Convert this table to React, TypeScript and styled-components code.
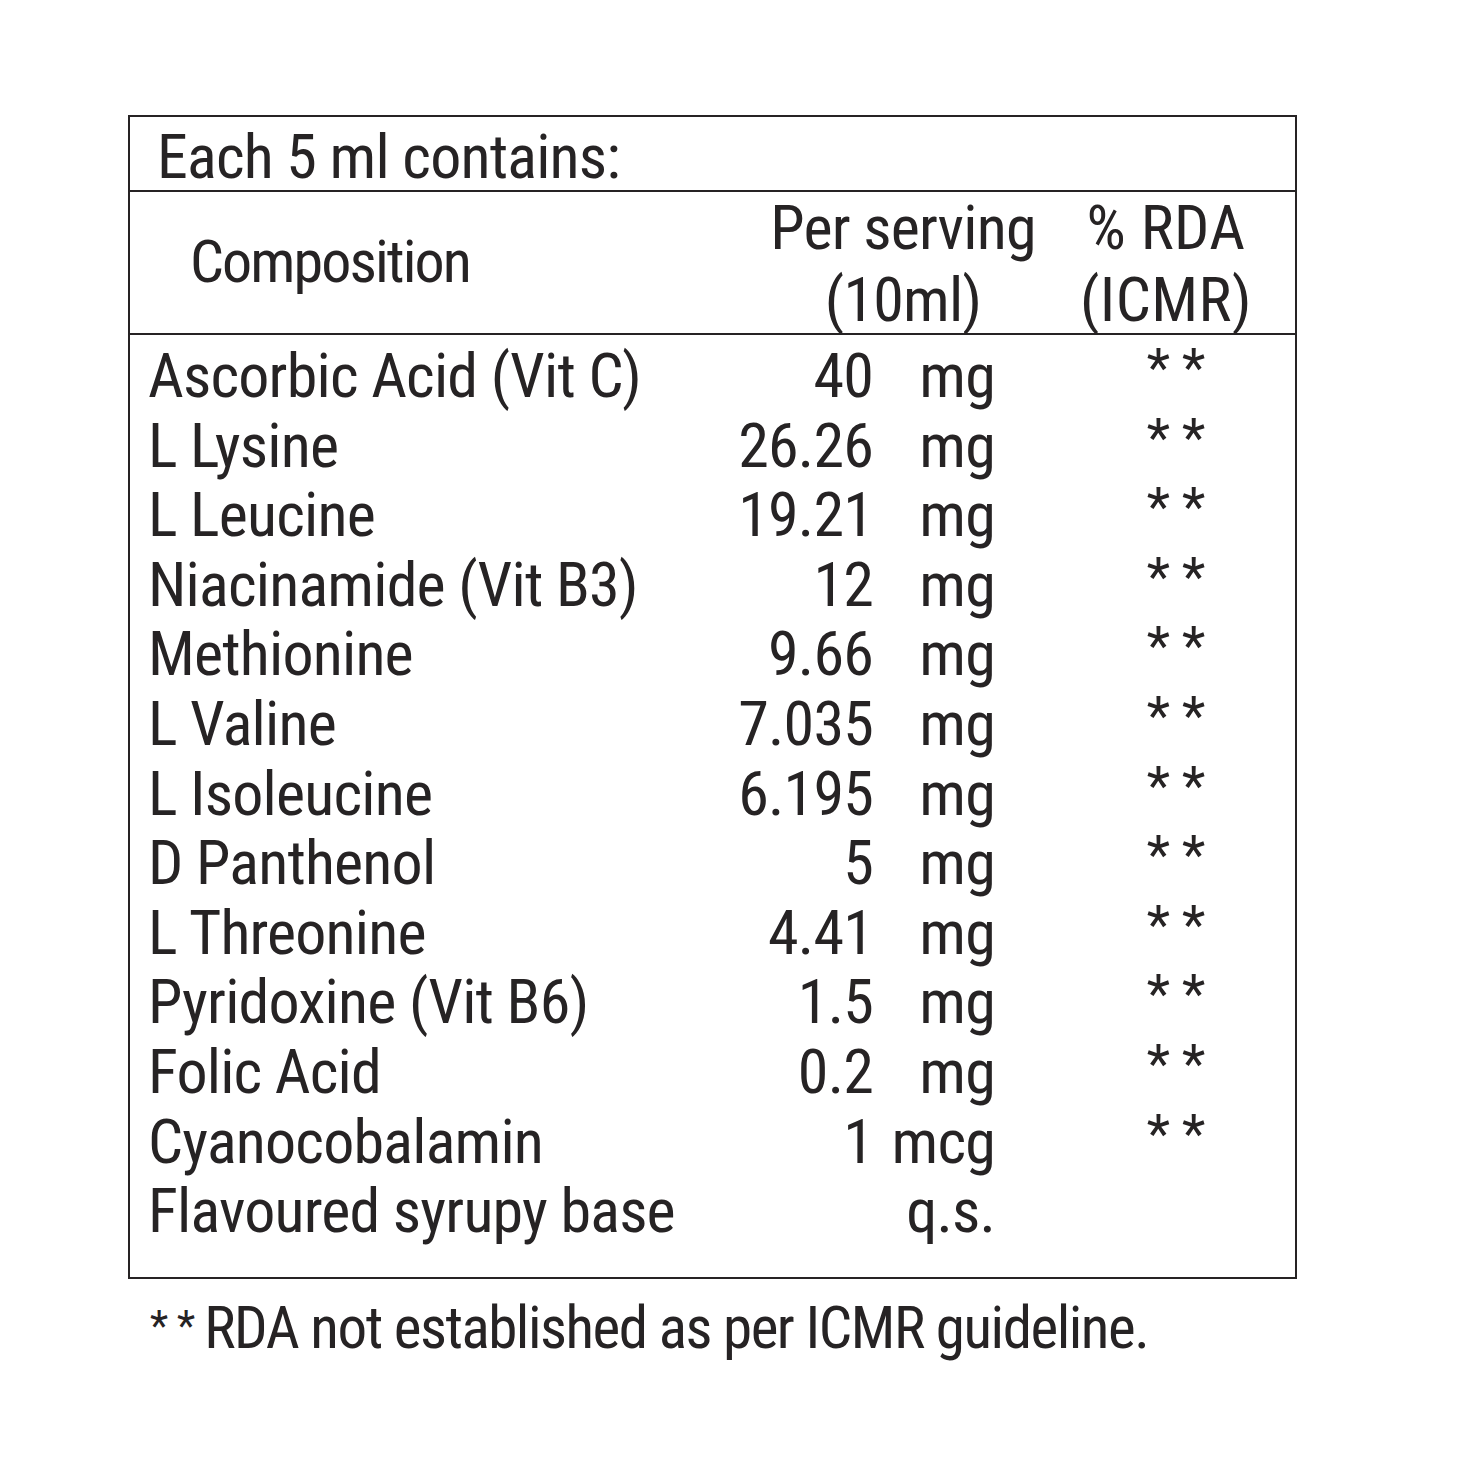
import styled, { createGlobalStyle } from "styled-components";

const GlobalStyle = createGlobalStyle`
  html, body {
    margin: 0;
    padding: 0;
    background: #ffffff;
  }
  body {
    font-family: "Roboto Condensed", "Liberation Sans", sans-serif;
    color: #262324;
    letter-spacing: -0.8px;
  }
`;

type Ingredient = {
  name: string;
  amount: string;
  unit: string;
  rda: string;
};

const ingredients: Ingredient[] = [
  { name: "Ascorbic Acid (Vit C)", amount: "40", unit: "mg", rda: "**" },
  { name: "L Lysine", amount: "26.26", unit: "mg", rda: "**" },
  { name: "L Leucine", amount: "19.21", unit: "mg", rda: "**" },
  { name: "Niacinamide (Vit B3)", amount: "12", unit: "mg", rda: "**" },
  { name: "Methionine", amount: "9.66", unit: "mg", rda: "**" },
  { name: "L Valine", amount: "7.035", unit: "mg", rda: "**" },
  { name: "L Isoleucine", amount: "6.195", unit: "mg", rda: "**" },
  { name: "D Panthenol", amount: "5", unit: "mg", rda: "**" },
  { name: "L Threonine", amount: "4.41", unit: "mg", rda: "**" },
  { name: "Pyridoxine (Vit B6)", amount: "1.5", unit: "mg", rda: "**" },
  { name: "Folic Acid", amount: "0.2", unit: "mg", rda: "**" },
  { name: "Cyanocobalamin", amount: "1", unit: "mcg", rda: "**" },
  { name: "Flavoured syrupy base", amount: "", unit: "q.s.", rda: "" },
];

const Page = styled.div`
  padding: 115px 0 0 128px;
`;

const Label = styled.div`
  width: 1169px;
  box-sizing: border-box;
  border: 2px solid #262324;
`;

const TitleRow = styled.div`
  height: 75px;
  box-sizing: border-box;
  padding: 5px 0 0 27px;
  font-size: 62px;
  line-height: 70px;
  border-bottom: 2px solid #262324;
`;

const HeaderRow = styled.div`
  display: grid;
  grid-template-columns: 1fr 300px 200px;
  column-gap: 13px;
  align-items: center;
  height: 143px;
  box-sizing: border-box;
  padding: 0 29px 0 0;
  font-size: 62px;
  line-height: 72px;
  white-space: nowrap;
  border-bottom: 2px solid #262324;
`;

const CompositionCell = styled.div`
  padding: 0 0 14px 60px;
  font-size: 60px;
  letter-spacing: -1.9px;
`;

const ColumnHead = styled.div<{ $spacing: number }>`
  text-align: center;
  padding-bottom: 10px;
  letter-spacing: ${(p) => p.$spacing}px;
`;

const Body = styled.div`
  padding: 6px 0 31px 18px;
`;

const Row = styled.div`
  display: grid;
  grid-template-columns: 560px 165px 122px 1fr;
  font-size: 62px;
  line-height: 69.6px;
  white-space: nowrap;
`;

const Name = styled.span``;

const Amount = styled.span`
  text-align: right;
`;

const Unit = styled.span`
  text-align: right;
`;

const Rda = styled.span`
  text-align: center;
  padding-left: 74px;
`;

const Asterisks = styled.span<{ $size: number; $gap: number; $lift: number }>`
  font-size: ${(p) => p.$size}px;
  line-height: 0;
  letter-spacing: ${(p) => p.$gap}px;
  vertical-align: ${(p) => p.$lift}px;
`;

const Footnote = styled.p`
  margin: 14px 0 0 22px;
  font-size: 59px;
  line-height: 70px;
  letter-spacing: -1.45px;
`;

export default function App() {
  return (
    <Page>
      <GlobalStyle />
      <Label>
        <TitleRow>Each 5 ml contains:</TitleRow>
        <HeaderRow>
          <CompositionCell>Composition</CompositionCell>
          <ColumnHead $spacing={-0.8}>
            Per serving
            <br />
            (10ml)
          </ColumnHead>
          <ColumnHead $spacing={0.4}>
            % RDA
            <br />
            (ICMR)
          </ColumnHead>
        </HeaderRow>
        <Body>
          {ingredients.map((item) => (
            <Row key={item.name}>
              <Name>{item.name}</Name>
              <Amount>{item.amount}</Amount>
              <Unit>{item.unit}</Unit>
              <Rda>
                {item.rda && (
                  <Asterisks $size={54} $gap={12} $lift={11}>
                    {item.rda}
                  </Asterisks>
                )}
              </Rda>
            </Row>
          ))}
        </Body>
      </Label>
      <Footnote>
        <Asterisks $size={42} $gap={9} $lift={8}>
          **
        </Asterisks>
        RDA not established as per ICMR guideline.
      </Footnote>
    </Page>
  );
}
